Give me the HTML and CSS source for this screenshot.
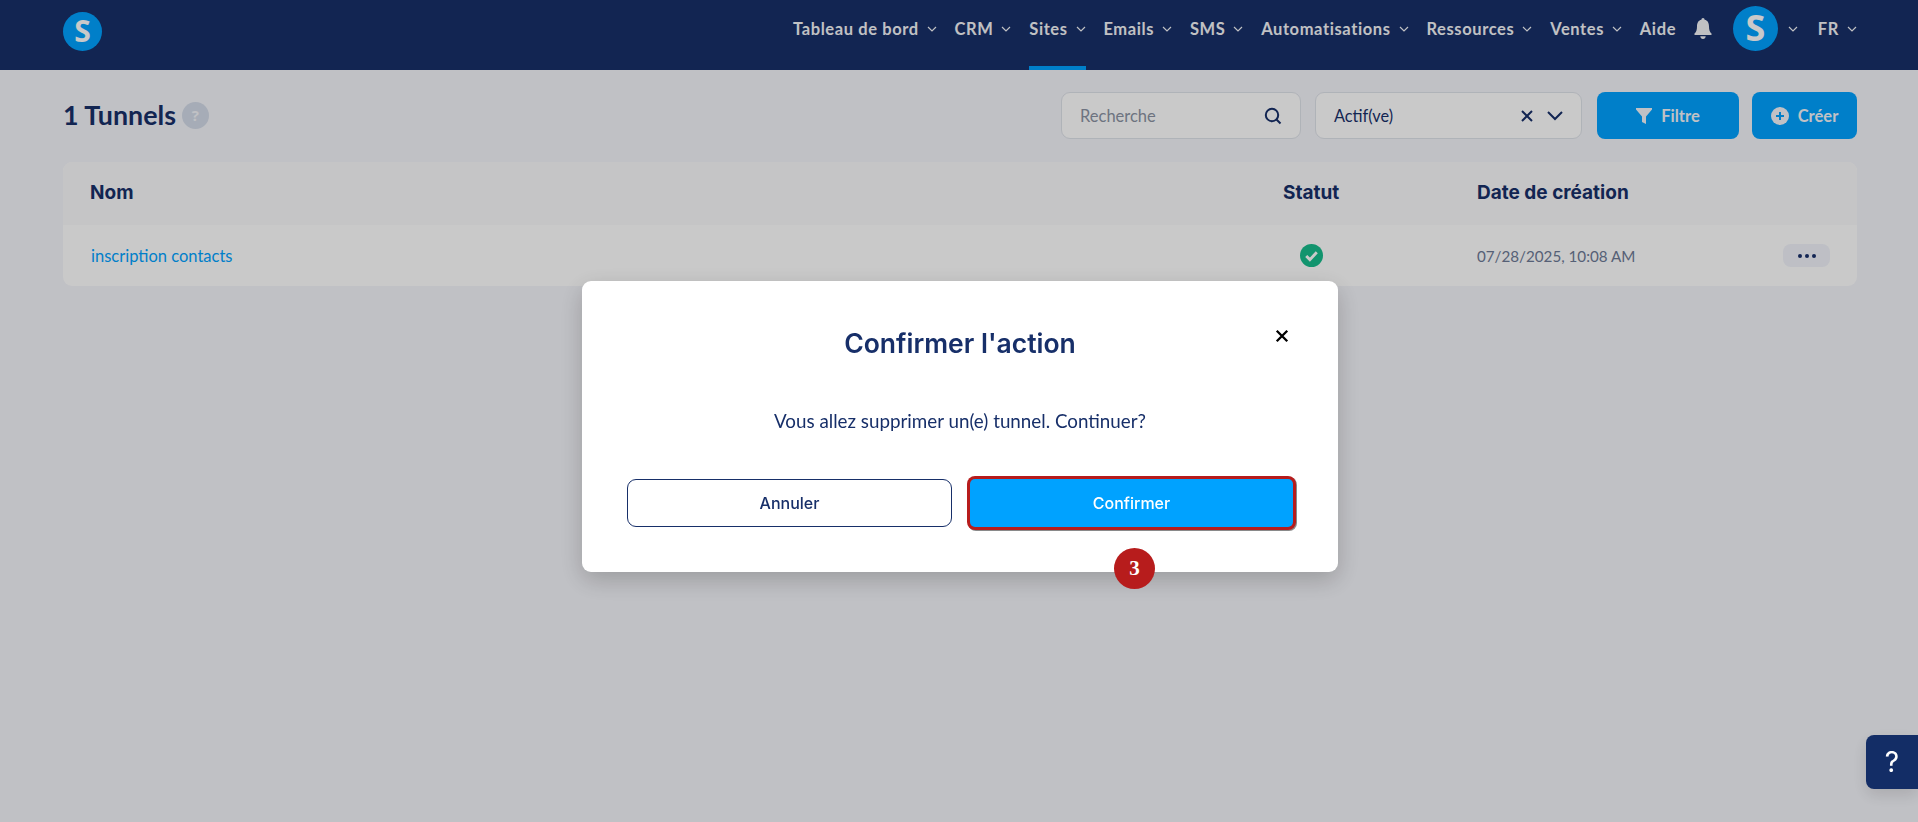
FILE: index.html
```html
<!DOCTYPE html>
<html lang="fr">
<head>
    <meta charset="UTF-8">
    <meta name="viewport" content="width=device-width, initial-scale=1.0">
    <title>Tunnels</title>
    <link rel="stylesheet" href="styles.css">
</head>
<body>
    <header class="topbar">
        <div class="logo">S</div>
        <nav class="nav">
            <a class="nav-item">Tableau de bord <svg class="chev" viewBox="0 0 10 6"><path d="M1 1l4 4 4-4"/></svg></a>
            <a class="nav-item">CRM <svg class="chev" viewBox="0 0 10 6"><path d="M1 1l4 4 4-4"/></svg></a>
            <a class="nav-item active">Sites <svg class="chev" viewBox="0 0 10 6"><path d="M1 1l4 4 4-4"/></svg></a>
            <a class="nav-item">Emails <svg class="chev" viewBox="0 0 10 6"><path d="M1 1l4 4 4-4"/></svg></a>
            <a class="nav-item">SMS <svg class="chev" viewBox="0 0 10 6"><path d="M1 1l4 4 4-4"/></svg></a>
            <a class="nav-item">Automatisations <svg class="chev" viewBox="0 0 10 6"><path d="M1 1l4 4 4-4"/></svg></a>
            <a class="nav-item">Ressources <svg class="chev" viewBox="0 0 10 6"><path d="M1 1l4 4 4-4"/></svg></a>
            <a class="nav-item">Ventes <svg class="chev" viewBox="0 0 10 6"><path d="M1 1l4 4 4-4"/></svg></a>
            <a class="nav-item">Aide</a>
            <svg class="bell" viewBox="0 0 18 21"><path d="M9 0a1.6 1.6 0 0 1 1.6 1.7C14 2.400 15 5.200 15 8.500c0 3.600.8 5.300 2.400 6.900.6.600.3 1.600-.6 1.600H1.200c-.9 0-1.200-1-.6-1.600C2.200 13.800 3 12.100 3 8.500c0-3.300 1-6.100 4.400-6.800A1.600 1.600 0 0 1 9 0zM6.300 18.300h5.400C11.700 19.800 10.500 21 9 21s-2.700-1.200-2.700-2.700z"/></svg>
            <div class="avatar">S</div>
            <svg class="chev chev-avatar" viewBox="0 0 10 6"><path d="M1 1l4 4 4-4"/></svg>
            <a class="nav-item lang">FR <svg class="chev" viewBox="0 0 10 6"><path d="M1 1l4 4 4-4"/></svg></a>
        </nav>
    </header>

    <main class="page">
        <div class="toolbar">
            <h1>1 Tunnels</h1>
            <span class="hint">?</span>
            <div class="search">
                <span>Recherche</span>
                <svg viewBox="0 0 18 18"><circle cx="8" cy="8" r="6.200"/><path d="M12.500 12.500L16.500 16.500"/></svg>
            </div>
            <div class="status-select">
                <span>Actif(ve)</span>
                <svg class="icon-x" viewBox="0 0 12 12"><path d="M1 1l10 10M11 1L1 11"/></svg>
                <svg class="icon-down" viewBox="0 0 16 10"><path d="M1 1l7 7 7-7"/></svg>
            </div>
            <button class="btn btn-filter">
                <svg viewBox="0 0 16 16"><path d="M0 0h16v1.500L10 8.500V16l-4-2V8.500L0 1.500z"/></svg>
                Filtre
            </button>
            <button class="btn btn-create">
                <svg viewBox="0 0 18 18"><circle cx="9" cy="9" r="9"/><path class="plus" d="M9 5v8M5 9h8"/></svg>
                Créer
            </button>
        </div>

        <div class="table">
            <div class="row head">
                <div>Nom</div>
                <div>Statut</div>
                <div>Date de création</div>
            </div>
            <div class="row body-row">
                <a class="tunnel-link">inscription contacts</a>
                <div class="status-cell">
                    <svg viewBox="0 0 24 24"><circle cx="12" cy="12" r="12"/><path d="M6.500 12.500l3.800 3.800 7.200-7.600"/></svg>
                </div>
                <div class="date-cell">07/28/2025, 10:08 AM</div>
                <button class="more"><i></i><i></i><i></i></button>
            </div>
        </div>
    </main>

    <div class="overlay"></div>

    <div class="modal">
        <button class="modal-close">
            <svg viewBox="0 0 12 12"><path d="M1.500 1.500l9 9M10.500 1.500l-9 9"/></svg>
        </button>
        <h2>Confirmer l'action</h2>
        <p>Vous allez supprimer un(e) tunnel. Continuer?</p>
        <div class="modal-actions">
            <button class="cancel">Annuler</button>
            <button class="confirm">Confirmer</button>
        </div>
        <span class="step">3</span>
    </div>

    <button class="help">?</button>
</body>
</html>
```

FILE: styles.css
```css
* {
    box-sizing: border-box;
}
html, body {
    height: 100%;
}
body {
    margin: 0;
    overflow: hidden;
    background: #f4f5fa;
    color: #172f69;
    font-family: Lato, "Liberation Sans", sans-serif;
}
button {
    font-family: inherit;
    border: 0;
    cursor: pointer;
}
.topbar {
    height: 70px;
    background: #172f69;
    display: flex;
    align-items: center;
    padding: 0 61px 0 63px;
    justify-content: space-between;
}
.logo {
    width: 39px;
    height: 39px;
    margin-top: -8px;
    border-radius: 50%;
    background: #00a2ff;
    color: #fff;
    font: 700 30px/38px "Open Sans", sans-serif;
    text-align: center;
}
.nav {
    display: flex;
    align-items: center;
    height: 70px;
    color: #f4f5f8;
}
.nav-item {
    position: relative;
    display: flex;
    align-items: center;
    height: 70px;
    gap: 8px;
    margin-right: 17.800px;
    padding-bottom: 12px;
    font-weight: 700;
    font-size: 16.500px;
    letter-spacing: .6px;
    white-space: nowrap;
}
.nav-item.active::after {
    content: "";
    position: absolute;
    left: 0;
    right: 0;
    bottom: 0;
    height: 4px;
    background: #00a2ff;
}
.nav-item.lang {
    margin-right: 0;
}
.chev {
    width: 10px;
    height: 6px;
    fill: none;
    stroke: #f4f5f8;
    stroke-width: 1.200;
}
.chev-avatar {
    margin: -12px 20px 0 10px;
}
.bell {
    width: 18px;
    height: 21px;
    fill: #f4f5f8;
    margin: -13px 21px 0 0;
}
.avatar {
    width: 45px;
    height: 45px;
    border-radius: 50%;
    background: #00a2ff;
    color: #fff;
    font: 700 36px/44px "Open Sans", sans-serif;
    text-align: center;
    margin-top: -13px;
}
.page {
    padding: 0 61px 0 63px;
}
.toolbar {
    display: flex;
    align-items: center;
    height: 91px;
    margin-bottom: 1px;
}
h1 {
    margin: 0;
    padding-bottom: 2px;
    font-size: 26.800px;
    font-weight: 700;
}
.hint {
    width: 27px;
    height: 27px;
    margin-left: 6px;
    border-radius: 50%;
    background: #d3dbe8;
    color: #f4f5fa;
    font: 700 15px/27px "Open Sans", sans-serif;
    text-align: center;
}
.search, .status-select {
    display: flex;
    align-items: center;
    height: 47px;
    background: #fff;
    border: 1px solid #dfe3ea;
    border-radius: 9px;
}
.search {
    width: 240px;
    margin-left: auto;
    padding: 0 18px;
    justify-content: space-between;
    color: #8b93a3;
    font-size: 16.500px;
}
.search svg {
    width: 18px;
    height: 18px;
    fill: none;
    stroke: #172f69;
    stroke-width: 2;
}
.status-select {
    width: 267px;
    margin-left: 14px;
    padding: 0 18px;
    color: #172f69;
    font-size: 16.300px;
}
.status-select span {
    flex: 1;
}
.icon-x {
    width: 12px;
    height: 12px;
    fill: none;
    stroke: #172f69;
    stroke-width: 2;
}
.icon-down {
    width: 16px;
    height: 10px;
    margin-left: 14px;
    fill: none;
    stroke: #172f69;
    stroke-width: 2;
}
.btn {
    display: flex;
    align-items: center;
    justify-content: center;
    height: 47px;
    gap: 9px;
    border-radius: 8px;
    background: #00a2ff;
    color: #f4f5fa;
    font-size: 16.500px;
    font-weight: 700;
}
.btn svg {
    fill: #f4f5fa;
}
.btn-filter {
    width: 142px;
    margin-left: 15px;
}
.btn-filter svg {
    width: 16px;
    height: 16px;
}
.btn-create {
    width: 105px;
    margin-left: 13px;
}
.btn-create svg {
    width: 18px;
    height: 18px;
}
.plus {
    fill: none;
    stroke: #00a2ff;
    stroke-width: 2;
}
.table {
    background: #fff;
    border-radius: 9px;
    overflow: hidden;
}
.row {
    display: grid;
    grid-template-columns: 1193px 194px 1fr auto;
    align-items: center;
    padding: 0 27px;
}
.head {
    height: 63px;
    padding-bottom: 2px;
    background: #fafafb;
    font: 700 19px Inter, sans-serif;
}
.body-row {
    height: 61px;
}
.tunnel-link {
    color: #00a2ff;
    font-size: 16.500px;
    margin-left: 1px;
}
.status-cell svg {
    display: block;
    width: 23px;
    height: 23px;
    margin-left: 17px;
    fill: #18bc8c;
}
.status-cell path {
    fill: none;
    stroke: #fff;
    stroke-width: 3;
}
.date-cell {
    color: #6d7a96;
    font-size: 15.200px;
}
.more {
    display: flex;
    align-items: center;
    justify-content: center;
    gap: 3px;
    width: 47px;
    height: 23px;
    padding: 0;
    border-radius: 8px;
    background: #f1f3fa;
}
.more i {
    width: 4px;
    height: 4px;
    border-radius: 50%;
    background: #172f69;
}
.overlay {
    position: fixed;
    inset: 0;
    background: rgba(0, 0, 0, .21);
}
.modal {
    position: fixed;
    left: 582px;
    top: 281px;
    width: 756px;
    height: 291px;
    padding: 0 45px;
    background: #fff;
    border-radius: 9px;
    box-shadow: 0 8px 24px rgba(0, 0, 0, .2);
    text-align: center;
}
.modal h2 {
    margin: 0;
    padding-top: 43px;
    font: 600 26.500px/38px Inter, sans-serif;
}
.modal p {
    margin: 0;
    padding-top: 45px;
    font-size: 18.800px;
    line-height: 28px;
}
.modal-close {
    position: absolute;
    top: 48px;
    right: 49px;
    width: 14px;
    height: 14px;
    padding: 0;
    background: none;
}
.modal-close svg {
    display: block;
    fill: none;
    stroke: #000;
    stroke-width: 2;
}
.modal-actions {
    display: flex;
    justify-content: space-between;
    margin-top: 44px;
}
.modal-actions button {
    height: 48px;
    font: 500 16px Inter, sans-serif;
}
.cancel {
    width: 325px;
    border-radius: 9px;
    background: #fff;
    color: #172f69;
    border: 1px solid #172f69;
}
.confirm {
    width: 323px;
    border-radius: 5px;
    background: #00a2ff;
    color: #fff;
    box-shadow: 0 0 0 3px #b71c1c, 1px 1px 0 3px #8a8a8a;
}
.step {
    position: absolute;
    left: 532px;
    top: 267px;
    width: 41px;
    height: 41px;
    border-radius: 50%;
    background: #b71c1c;
    color: #fff;
    font: 700 21px/41px "Liberation Serif", serif;
    text-align: center;
}
.help {
    position: fixed;
    right: 0;
    top: 735px;
    width: 52px;
    height: 54px;
    padding: 0;
    border-radius: 8px 0 0 8px;
    background: #132d66;
    color: #fff;
    font: 400 28px Inter, sans-serif;
    box-shadow: 0 6px 16px rgba(0, 0, 0, .12);
}
```
